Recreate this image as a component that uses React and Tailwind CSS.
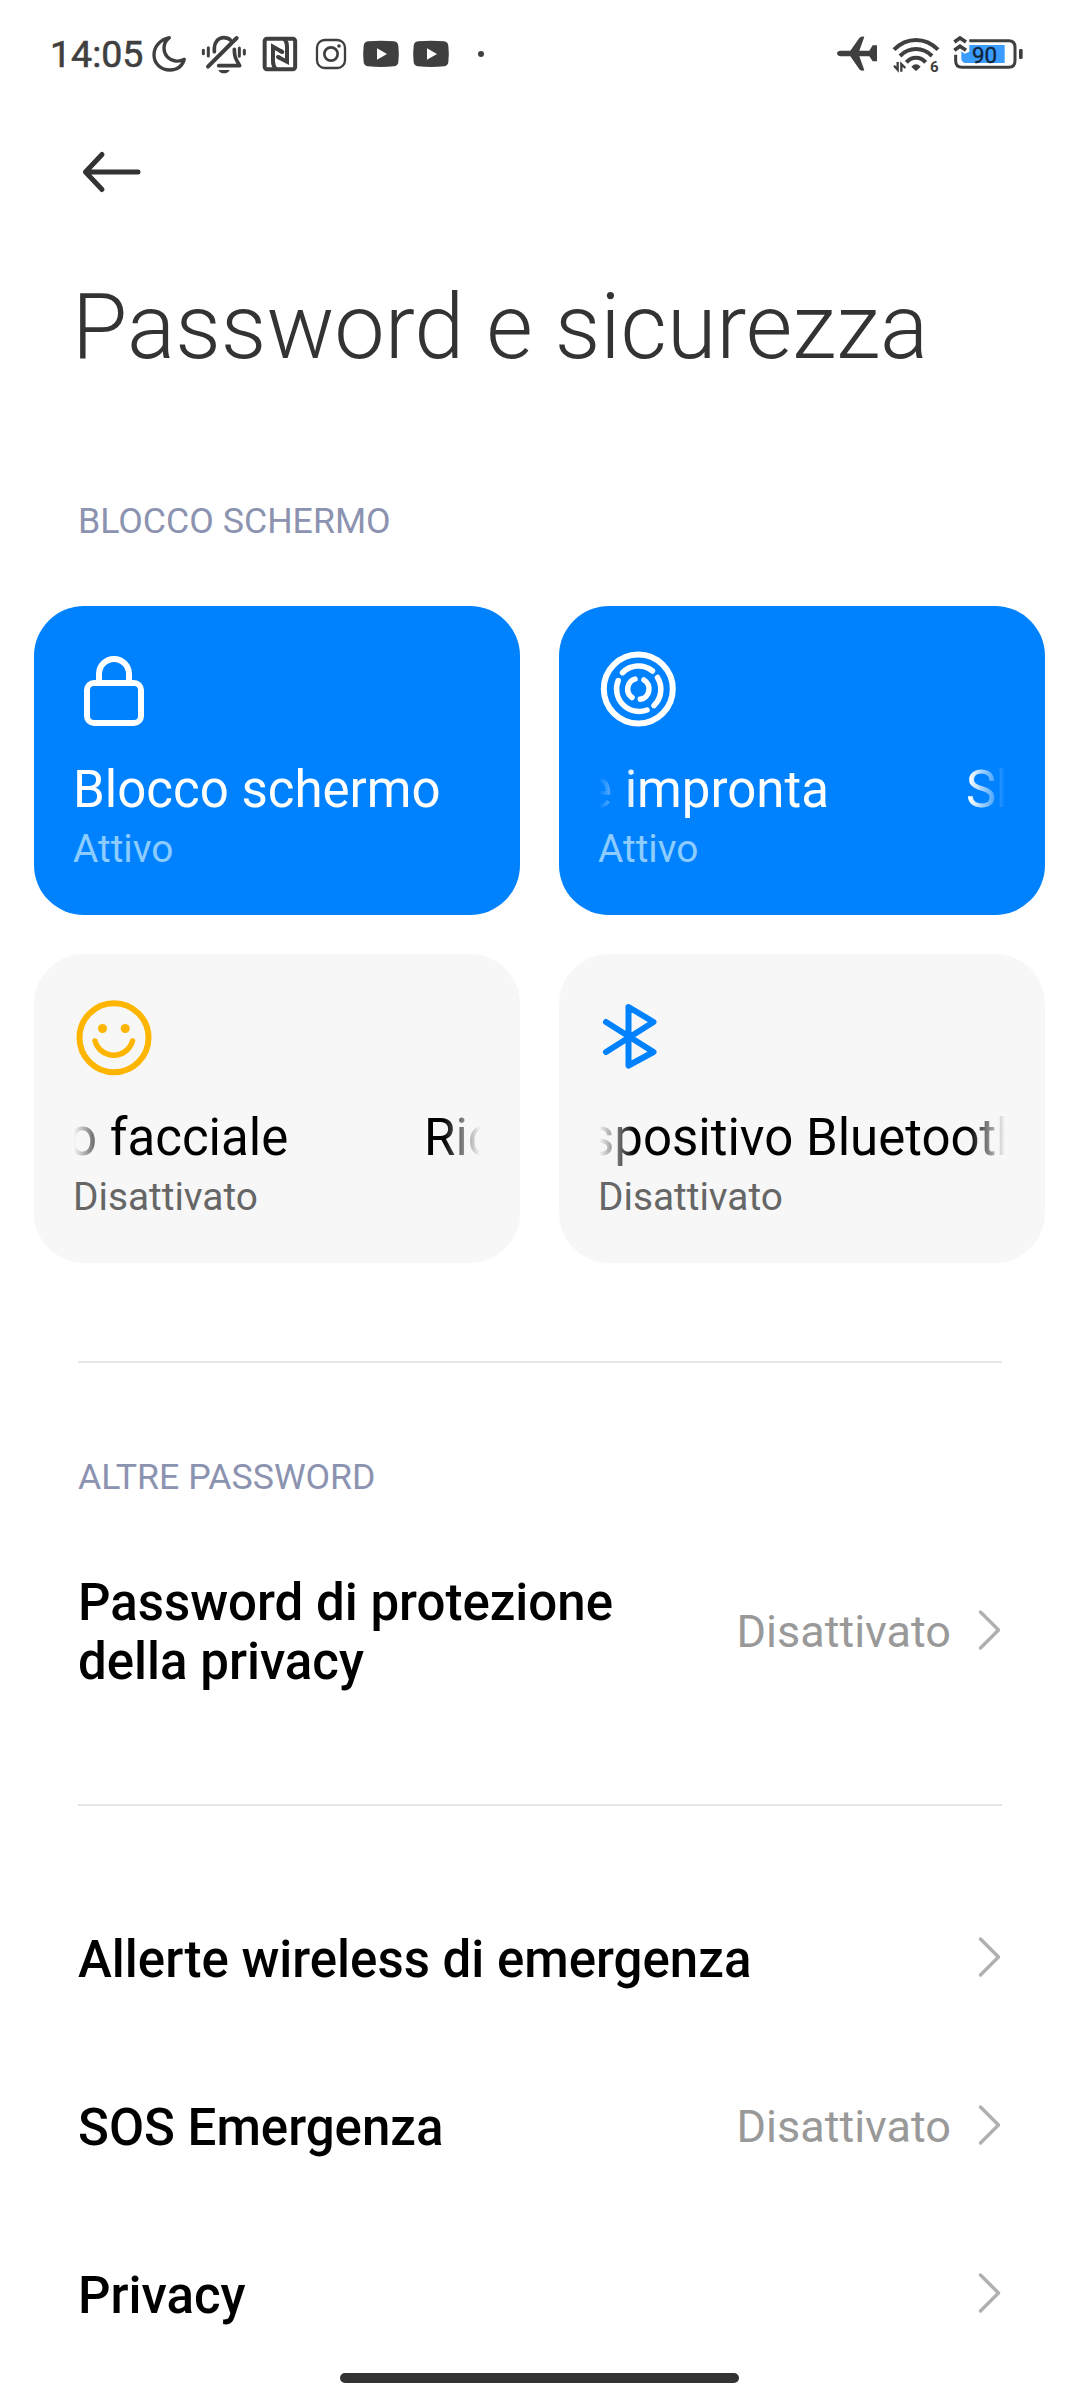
const INK = '#3f3f3f';

function MoonIcon() {
  return (
    <svg className="ml-[6px] h-10 w-10 shrink-0" viewBox="360 42 120 120" fill="none" stroke={INK} strokeWidth="10" strokeLinejoin="round">
      <path d="M418 53C392 58 372 79 372 104C372 131 393 150 420 150C441 150 457 138 463 118C455 122 446 124 437 123C415 120 402 104 402 84C402 72 408 61 418 53Z" />
    </svg>
  );
}

function SilentBellIcon() {
  return (
    <svg className="ml-[10px] h-10 w-[48px] shrink-0" viewBox="510 42 144 120" fill="none" stroke={INK} strokeLinecap="round" strokeLinejoin="round">
      <path d="M553 95V84C554 66 565 53 581 53C589 53 596 55 601 60" strokeWidth="11" />
      <path d="M613 88C613 104 614 112 620 121L629 137H566" strokeWidth="11" />
      <path d="M534 140L620 54" strokeWidth="12" />
      <path d="M565 150H599C596 157 590 160 582 160C574 160 568 157 565 150Z" fill={INK} stroke="none" />
      <path d="M520 91V101M535 83V108M628 84V109M643 91V102" strokeWidth="9" />
    </svg>
  );
}

function NfcIcon() {
  return (
    <svg className="ml-[12px] h-10 w-10 shrink-0" viewBox="30 42 120 120" fill="none" stroke={INK}>
      <rect x="44" y="56" width="91.500" height="91.500" rx="7" strokeWidth="12" />
      <path d="M97 96L69 80V124Q69 138 78 149" strokeWidth="12" />
      <path d="M84 111L111 125V80Q111 66 102 55" strokeWidth="12" />
      <path d="M92 93L97 96M84 111L89 113.500" strokeWidth="12" strokeLinecap="round" />
    </svg>
  );
}

function InstagramIcon() {
  return (
    <svg className="ml-[13px] h-10 w-9 shrink-0" viewBox="189 42 108 120" fill="none" stroke={INK}>
      <rect x="201" y="60" width="84" height="84" rx="23" strokeWidth="7" />
      <circle cx="243" cy="102" r="20" strokeWidth="8" />
      <circle cx="267" cy="78" r="5.500" fill={INK} stroke="none" />
    </svg>
  );
}

function YoutubeIcon({ className }) {
  return (
    <svg className={className} viewBox="336 42 114 120">
      <path d="M354 64Q393 60 432 64Q443 65 445 77Q448 102 445 127Q443 138 432 139Q393 143 354 139Q343 138 341 127Q338 102 341 77Q343 65 354 64Z" fill={INK} />
      <path d="M381 85L411 102L381 119Z" fill="#fff" />
    </svg>
  );
}

function PlaneIcon() {
  return (
    <svg className="h-10 w-[44px] shrink-0" viewBox="45 42 132 120" fill={INK}>
      <path d="M60 92H91L118 54Q123 48 133 50L118 92H148L158 76H171V124H158L148 109H118L133 151Q123 155 118 148L91 109H60Q51 107 51 100.500Q51 94 60 92Z" />
    </svg>
  );
}

function WifiIcon() {
  return (
    <svg className="ml-[12px] h-10 w-[50px] shrink-0 overflow-visible" viewBox="213 42 150 120" fill="none" stroke={INK} strokeWidth="12">
      <path d="M222 89C260 50 316 50 354 89M240 108C267 80 309 80 336 108M259 127C275 109 301 109 317 127" />
      <path d="M274 140Q288 126 302 140L291 151Q288 154 285 151Z" fill={INK} stroke="none" />
      <path d="M222 137L233 149V126M244 155V132L256 144" strokeWidth="7" />
      <text x="330" y="155" fontSize="45" fontWeight="700" fill={INK} stroke="none">6</text>
    </svg>
  );
}

function BatteryIcon() {
  return (
    <svg className="ml-[11px] h-10 w-[74px] shrink-0" viewBox="396 42 222 120" fill="none" stroke={INK}>
      <path d="M448 62H566Q585 62 585 81V123Q585 142 566 142H426Q407 142 407 123V104" strokeWidth="9" />
      <path d="M403 66L420 54L438 66M403 91L420 79L438 91" strokeWidth="11" />
      <path d="M424 94L434 101L448 95V75H554V129H438Q424 129 424 115Z" fill="#3b9cff" stroke="none" />
      <rect x="597" y="87" width="11" height="30" rx="4" fill={INK} stroke="none" />
      <text x="456" y="129" fontSize="67" fill="#102338" stroke="#102338" strokeWidth="1">90</text>
    </svg>
  );
}

function StatusBar() {
  return (
    <div className="flex h-[108px] items-center pl-[50px] pr-[54px]">
      <div className="w-[94px] whitespace-nowrap text-[37.500px] leading-[44px] font-normal text-[#3f3f3f] [-webkit-text-stroke:0.6px_#3f3f3f]">14:05</div>
      <MoonIcon />
      <SilentBellIcon />
      <NfcIcon />
      <InstagramIcon />
      <YoutubeIcon className="ml-[13px] h-10 w-[38px] shrink-0" />
      <YoutubeIcon className="ml-[12px] h-10 w-[38px] shrink-0" />
      <div className="ml-[28px] size-[6px] rounded-full bg-[#3f3f3f]" />
      <div className="ml-auto flex items-center">
        <PlaneIcon />
        <WifiIcon />
        <BatteryIcon />
      </div>
    </div>
  );
}

function LockIcon() {
  return (
    <svg className="size-20" viewBox="0 0 80 80" fill="none" stroke="#fff" strokeWidth="6">
      <rect x="13" y="33" width="54" height="40" rx="7" />
      <path d="M25 32V24A15 15 0 0 1 55 24V32" />
    </svg>
  );
}

function FingerprintIcon() {
  return (
    <svg className="size-20" viewBox="0 0 80 80" fill="none" stroke="#fff" strokeWidth="6" strokeLinecap="round">
      <circle cx="39.300" cy="39" r="34.500" />
      <path d="M23.500 22.700A22.500 22.500 0 0 1 53.500 21" strokeWidth="5.500" />
      <path d="M58.500 27.500A22.500 22.500 0 0 1 55 55.500" strokeWidth="5.500" />
      <path d="M19.200 30.500A22.500 22.500 0 0 0 48 60" strokeWidth="5.500" />
      <path d="M36 29A10.500 10.500 0 0 0 33 47.500" strokeWidth="5.500" />
      <path d="M45 30A10.500 10.500 0 0 1 41.300 49.300" strokeWidth="5.500" />
    </svg>
  );
}

function SmileIcon() {
  return (
    <svg className="size-20" viewBox="0 0 80 80" fill="none" stroke="#fdb500" strokeWidth="6" strokeLinecap="round">
      <circle cx="40" cy="39.700" r="34.500" />
      <circle cx="28.500" cy="30.500" r="4.500" fill="#fdb500" stroke="none" />
      <circle cx="51.200" cy="30.500" r="4.500" fill="#fdb500" stroke="none" />
      <path d="M21 43A19.500 19.500 0 0 0 58.500 43" strokeWidth="5.500" />
    </svg>
  );
}

function BluetoothIcon() {
  return (
    <svg className="size-20" viewBox="0 0 80 80" fill="none" stroke="#0082ff" strokeWidth="6" strokeLinecap="round" strokeLinejoin="round">
      <path d="M7 24L54.500 54L29.500 67.500V9L54.500 24L7 54" />
    </svg>
  );
}

const MARQUEE =
  'h-[60px] overflow-hidden whitespace-pre text-[51px] leading-[60px] [mask-image:linear-gradient(to_right,transparent,#000_36px,#000_calc(100%-36px),transparent)]';

function Card({ active, icon, status, children }) {
  return (
    <div className={active ? 'h-[309px] rounded-[50px] bg-[#0082ff] px-10 pt-[44px] text-white' : 'h-[309px] rounded-[50px] bg-[#f7f7f7] px-10 pt-[44px] text-black'}>
      {icon}
      <div className="mt-[30px]">{children}</div>
      <div className={active ? '-ml-px mt-[6px] text-[38.800px] leading-[46px] text-[#8cccff]' : '-ml-px mt-[6px] text-[38.800px] leading-[46px] text-[#666]'}>{status}</div>
    </div>
  );
}

function SectionLabel({ className, children }) {
  return <h2 className={className}>{children}</h2>;
}

function Row({ className, title, value }) {
  return (
    <div className={className}>
      <div className="w-[560px] flex-none text-[51px] leading-[59px] font-medium whitespace-pre-line text-black">{title}</div>
      <div className="ml-auto flex items-center">
        {value && <span className="text-[45px] leading-[52px] text-[#999]">{value}</span>}
        <svg className="mb-[4px] ml-[24px] h-[44px] w-[28px]" viewBox="0 0 28 44" fill="none" stroke="#b0b0b0" strokeWidth="3.500" strokeLinecap="round" strokeLinejoin="round">
          <path d="M5.500 4L23.500 22L5.500 40" />
        </svg>
      </div>
    </div>
  );
}

export default function App() {
  return (
    <div className="relative flex h-[2400px] w-[1080px] flex-col overflow-hidden bg-white font-[Roboto,sans-serif]">
      <StatusBar />
      <div className="flex h-[128px] items-center pl-[80px]">
        <svg className="h-[44px] w-[64px]" viewBox="0 0 64 44" fill="none" stroke="#333" strokeWidth="5" strokeLinecap="round" strokeLinejoin="round">
          <path d="M58 22H5.500M22 4.500L5.500 22L22 39.500" />
        </svg>
      </div>
      <h1 className="mt-[38px] pl-[72px] text-[90px] leading-[108px] font-light whitespace-nowrap text-[#333]">Password e sicurezza</h1>

      <SectionLabel className="mt-[117px] pl-[78px] text-[35.700px] leading-[44px] text-[#8c93b0]">BLOCCO SCHERMO</SectionLabel>
      <div className="mx-[34px] mt-[63px] grid grid-cols-[486px_486px] gap-[39px]">
        <Card active icon={<LockIcon />} status="Attivo">
          <div className="-ml-px text-[51px] leading-[60px] whitespace-nowrap">Blocco schermo</div>
        </Card>
        <Card active icon={<FingerprintIcon />} status="Attivo">
          <div className={MARQUEE}>
            <div className="-ml-[14px] flex">
              <span className="w-[381px] shrink-0">e impronta</span>
              <span>Sb</span>
            </div>
          </div>
        </Card>
        <Card icon={<SmileIcon />} status="Disattivato">
          <div className={MARQUEE}>
            <div className="-ml-[6px] flex">
              <span className="w-[356px] shrink-0">o facciale</span>
              <span>Ric</span>
            </div>
          </div>
        </Card>
        <Card icon={<BluetoothIcon />} status="Disattivato">
          <div className={MARQUEE}>
            <div className="-ml-[11px]">spositivo Bluetooth</div>
          </div>
        </Card>
      </div>

      <div className="mx-[78px] mt-[98px] h-[2px] shrink-0 bg-[#e6e6e6]" />
      <SectionLabel className="mt-[92px] pl-[78px] text-[35.700px] leading-[44px] text-[#8c93b0]">ALTRE PASSWORD</SectionLabel>
      <Row className="mt-[74px] flex h-[118px] items-center pr-[77px] pl-[78px]" title={'Password di protezione\ndella privacy'} value="Disattivato" />
      <div className="mx-[78px] mt-[113px] h-[2px] shrink-0 bg-[#e6e6e6]" />

      <div className="mt-[69px] shrink-0">
        <Row className="flex h-[168px] items-center pr-[77px] pl-[78px] whitespace-nowrap [&>div:first-child]:w-[700px]" title="Allerte wireless di emergenza" />
        <Row className="flex h-[168px] items-center pr-[77px] pl-[78px]" title="SOS Emergenza" value="Disattivato" />
        <Row className="flex h-[168px] items-center pr-[77px] pl-[78px]" title="Privacy" />
      </div>

      <div className="absolute bottom-[17px] left-[340px] h-[10px] w-[399px] rounded-full bg-[#333]" />
    </div>
  );
}
